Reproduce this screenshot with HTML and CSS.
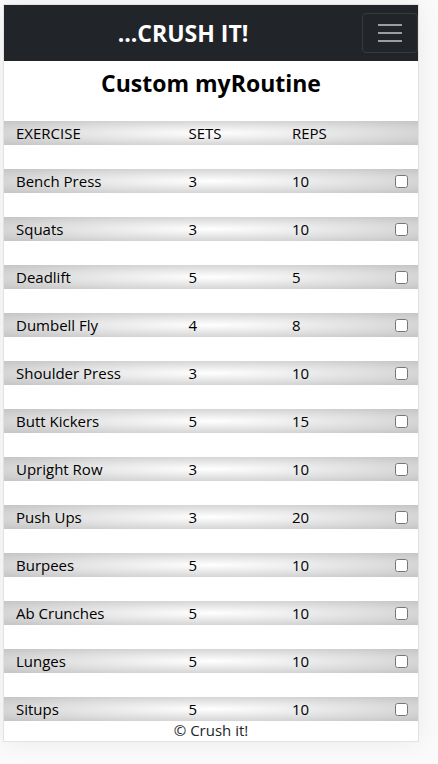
FILE: index.html
```html
<!DOCTYPE html>
<html lang="en">
<head>
<meta charset="utf-8">
<meta name="viewport" content="width=device-width, initial-scale=1">
<title>Crush it!</title>
<link rel="stylesheet" href="styles.css">
</head>
<body>
<div class="app">
  <header class="navbar">
    <a class="brand" href="#">...CRUSH IT!</a>
    <button class="toggler" type="button" aria-label="Toggle navigation">
      <svg width="30" height="30" viewBox="0 0 30 30" aria-hidden="true"><path d="M3 7h24M3 15h24M3 23h24" fill="none" stroke="#9b9d9e" stroke-width="2"/></svg>
    </button>
  </header>
  <main>
    <h1 class="title">Custom myRoutine</h1>
    <table class="routine">
      <thead>
        <tr><th scope="col">EXERCISE</th><th scope="col">SETS</th><th scope="col">REPS</th><td></td></tr>
      </thead>
      <tbody>
        <tr><td>Bench Press</td><td>3</td><td>10</td><td class="done"><input type="checkbox" aria-label="Bench Press"></td></tr>
        <tr><td>Squats</td><td>3</td><td>10</td><td class="done"><input type="checkbox" aria-label="Squats"></td></tr>
        <tr><td>Deadlift</td><td>5</td><td>5</td><td class="done"><input type="checkbox" aria-label="Deadlift"></td></tr>
        <tr><td>Dumbell Fly</td><td>4</td><td>8</td><td class="done"><input type="checkbox" aria-label="Dumbell Fly"></td></tr>
        <tr><td>Shoulder Press</td><td>3</td><td>10</td><td class="done"><input type="checkbox" aria-label="Shoulder Press"></td></tr>
        <tr><td>Butt Kickers</td><td>5</td><td>15</td><td class="done"><input type="checkbox" aria-label="Butt Kickers"></td></tr>
        <tr><td>Upright Row</td><td>3</td><td>10</td><td class="done"><input type="checkbox" aria-label="Upright Row"></td></tr>
        <tr><td>Push Ups</td><td>3</td><td>20</td><td class="done"><input type="checkbox" aria-label="Push Ups"></td></tr>
        <tr><td>Burpees</td><td>5</td><td>10</td><td class="done"><input type="checkbox" aria-label="Burpees"></td></tr>
        <tr><td>Ab Crunches</td><td>5</td><td>10</td><td class="done"><input type="checkbox" aria-label="Ab Crunches"></td></tr>
        <tr><td>Lunges</td><td>5</td><td>10</td><td class="done"><input type="checkbox" aria-label="Lunges"></td></tr>
        <tr><td>Situps</td><td>5</td><td>10</td><td class="done"><input type="checkbox" aria-label="Situps"></td></tr>
      </tbody>
    </table>
  </main>
  <footer class="footer">© Crush it!</footer>
</div>
</body>
</html>
```
FILE: styles.css
```css
* {
  box-sizing: border-box;
}

body {
  margin: 0;
  padding: 5px 20px 23px 4px;
  background: #fafafa;
  color: #000;
  font-family: "Segoe UI", "Open Sans", "Noto Sans", sans-serif;
  font-size: 15px;
  line-height: 24px;
}

.app {
  background: #fff;
  box-shadow: 0 0 0 1px #e2e2e2, 0 0 24px rgba(0, 0, 0, 0.07);
}

.navbar {
  display: grid;
  grid-template-columns: 1fr auto;
  align-items: center;
  height: 56px;
  background: #212529;
}

.brand {
  color: #fff;
  font-size: 23px;
  font-weight: 700;
  text-align: center;
  text-decoration: none;
}

.toggler {
  display: flex;
  padding: 4px 12px;
  border: 1px solid #373b3e;
  border-radius: 4px;
  background: none;
}

.title {
  margin: 0;
  padding: 4px 0 20px;
  font-size: 23px;
  font-weight: 700;
  line-height: 36px;
  text-align: center;
}

.routine,
.routine thead,
.routine tbody {
  display: grid;
  gap: 24px;
}

.routine tr {
  display: grid;
  grid-template-columns: 5fr 3fr 3fr 1fr;
  height: 24px;
  background: radial-gradient(#fff, #c4c4c4);
}

.routine th,
.routine td {
  padding: 0 0 0 12px;
  font-weight: 400;
  text-align: left;
}

.routine .done {
  display: flex;
  align-items: center;
  justify-content: flex-end;
  padding: 0 10px 0 0;
}

.done input {
  width: 13px;
  height: 13px;
  margin: 0;
}

.footer {
  padding-bottom: 2px;
  color: #212529;
  line-height: 18px;
  text-align: center;
}
```
